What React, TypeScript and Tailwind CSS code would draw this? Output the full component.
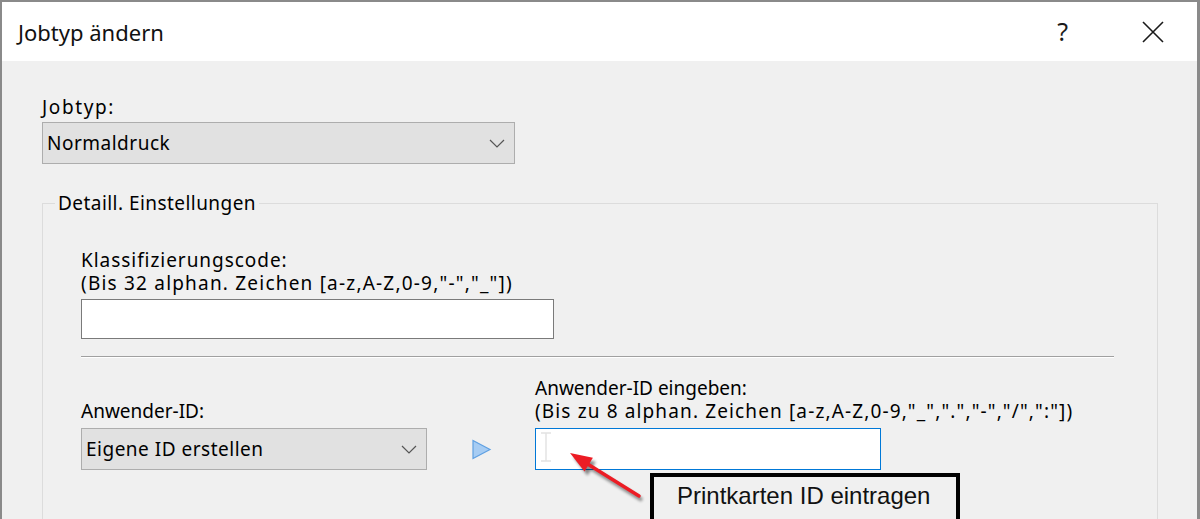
function Combo({ value, width }: { value: string; width: string }) {
  return (
    <div
      className={`${width} h-[42px] bg-[#e1e1e1] border border-[#adadad] flex items-center justify-between pl-[4px] pr-[9px]`}
    >
      <span className="text-[19px] leading-[22px] text-black tracking-[0.5px]">{value}</span>
      <svg width="16" height="9" viewBox="0 0 16 9" fill="none">
        <path d="M1 1l7 7 7-7" stroke="#555" strokeWidth="1.2" />
      </svg>
    </div>
  );
}

export default function App() {
  return (
    <div className="relative w-[1200px] h-[519px] overflow-hidden bg-[#f0f0f0] font-['Noto_Sans',sans-serif] text-black">
      <div className="h-full border-l-2 border-t-2 border-r-[3px] border-[#8a8a8a] flex flex-col">
        {/* title bar */}
        <div className="h-[59px] shrink-0 bg-white flex items-center pl-[16px]">
          <span className="text-[22px] leading-none text-[#111]">Jobtyp ändern</span>
          <span className="ml-auto mr-[74px] text-[25px] leading-none text-[#1a1a1a]">?</span>
          <svg width="22" height="22" viewBox="0 0 22 22" className="mr-[33px]">
            <path d="M1 1l20 20M21 1L1 21" stroke="#1a1a1a" strokeWidth="1.6" />
          </svg>
        </div>

        {/* body */}
        <div className="pl-[40px] pt-[35px] flex flex-col">
          <label className="text-[19px] leading-[22px] tracking-[1.6px]">Jobtyp:</label>
          <div className="mt-[4px]">
            <Combo value="Normaldruck" width="w-[473px]" />
          </div>

          <fieldset className="mt-[28px] w-[1116px] border border-[#dcdcdc] pb-[80px]">
            <legend className="ml-[12px] px-[3px] text-[19px] leading-[22px] tracking-[0.45px]">
              Detaill. Einstellungen
            </legend>
            <div className="pl-[38px] pt-[35px] flex flex-col">
              <span className="text-[19px] leading-[23px] tracking-[0.95px]">Klassifizierungscode:</span>
              <span className="text-[19px] leading-[23px] tracking-[1.2px]">
                (Bis 32 alphan. Zeichen [a-z,A-Z,0-9,"-","_"])
              </span>
              <input className="mt-[4px] w-[473px] h-[40px] bg-white border border-[#7a7a7a] outline-none" />

              <div className="mt-[17px] w-[1033px] h-[2px] border-t border-[#a0a0a0] border-b border-b-white" />

              <div className="mt-[19px] flex items-end">
                <div className="flex flex-col w-[346px]">
                  <span className="text-[19px] leading-[23px]">Anwender-ID:</span>
                  <div className="mt-[5px]">
                    <Combo value="Eigene ID erstellen" width="w-[346px]" />
                  </div>
                </div>
                <div className="h-[42px] ml-[44px] flex items-center">
                  <svg width="21" height="21" viewBox="0 0 21 21">
                    <path d="M2 1.5L19 10.5 2 19.5z" fill="#a6ccf3" stroke="#5fa0e2" strokeWidth="1.2" />
                  </svg>
                </div>
                <div className="ml-[43px] flex flex-col">
                  <span className="text-[19px] leading-[23px]">Anwender-ID eingeben:</span>
                  <span className="text-[19px] leading-[23px] tracking-[1.13px]">
                    (Bis zu 8 alphan. Zeichen [a-z,A-Z,0-9,"_",".","-","/",":"])
                  </span>
                  <div className="relative mt-[5px] w-[346px] h-[42px]">
                    <input className="w-full h-full bg-white border border-[#0078d7] outline-none" />
                    <svg
                      width="14"
                      height="30"
                      viewBox="0 0 14 30"
                      className="absolute left-[4px] top-[4px] pointer-events-none"
                    >
                      <path d="M2 1h10M7 1v28M2 29h10" stroke="#e2e2e2" strokeWidth="1.4" fill="none" />
                    </svg>
                  </div>
                </div>
              </div>
            </div>
          </fieldset>
        </div>
      </div>

      {/* annotation arrow */}
      <svg className="absolute inset-0 pointer-events-none" width="1200" height="519">
        <defs>
          <filter id="sh" x="-20%" y="-20%" width="140%" height="140%">
            <feGaussianBlur stdDeviation="1.8" />
          </filter>
        </defs>
        <g transform="translate(3 4)" filter="url(#sh)" opacity="0.45">
          <path d="M586 463L639 496" stroke="#000" strokeWidth="3.5" />
          <path d="M570 453L584.5 471.4 592.9 457.8z" fill="#000" />
        </g>
        <path d="M586 463L639 496" stroke="#ec1c24" strokeWidth="3.5" strokeLinecap="round" />
        <path d="M570 453L584.5 471.4 592.9 457.8z" fill="#ec1c24" />
      </svg>

      {/* callout */}
      <div className="absolute left-[650px] top-[473px] w-[310px] h-[60px] border-4 border-black bg-[#f0f0f0] pl-[23px] pt-[5px]">
        <span className="font-['Liberation_Sans',Arial,sans-serif] text-[24px] leading-[28px] text-[#111]">
          Printkarten ID eintragen
        </span>
      </div>
    </div>
  );
}
